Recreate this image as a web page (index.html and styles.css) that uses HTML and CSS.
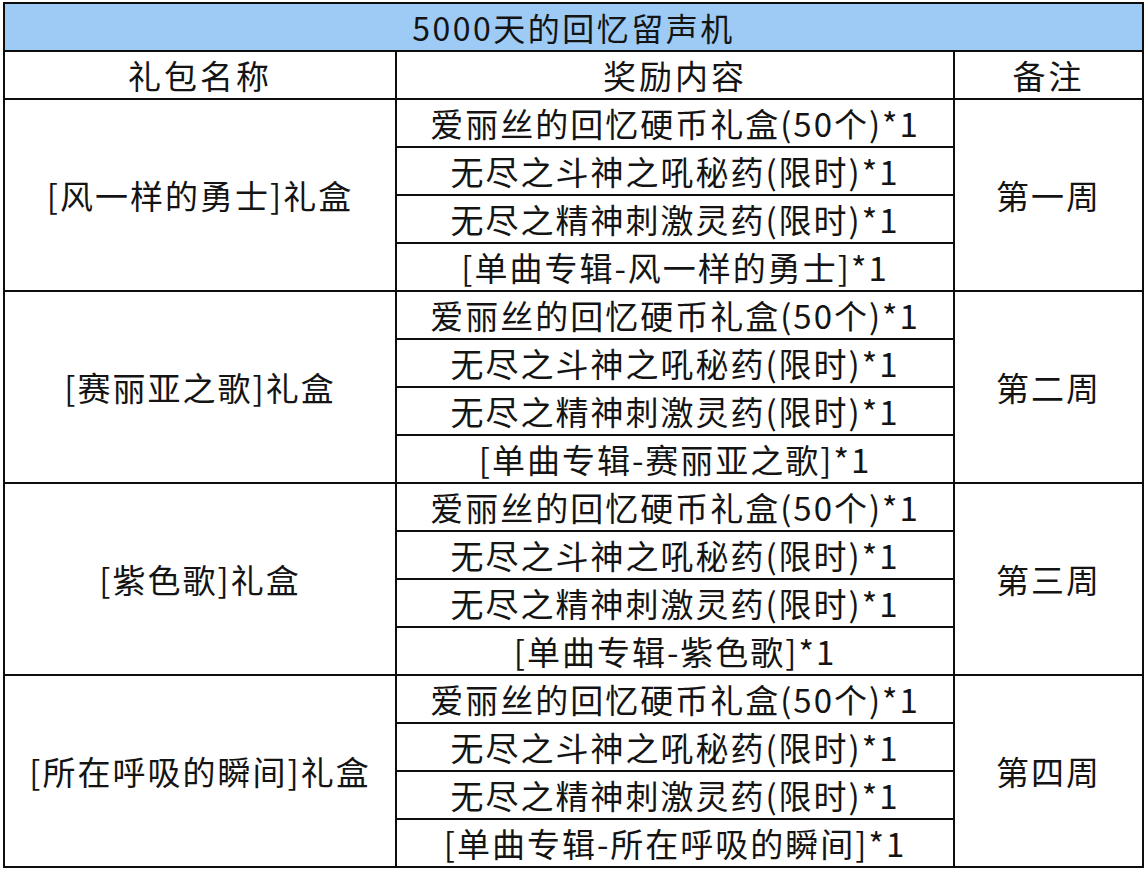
FILE: index.html
```html
<!DOCTYPE html>
<html lang="zh">
<head>
<meta charset="utf-8">
<link rel="stylesheet" href="styles.css">
</head>
<body>
<table class="gift">
  <colgroup><col class="c1"><col class="c2"><col class="c3"></colgroup>
  <tr class="title"><td colspan="3">5000天的回忆留声机</td></tr>
  <tr class="head"><td>礼包名称</td><td>奖励内容</td><td>备注</td></tr>

  <tr><td rowspan="4" class="name">[风一样的勇士]礼盒</td><td>爱丽丝的回忆硬币礼盒(50个)*1</td><td rowspan="4" class="note">第一周</td></tr>
  <tr><td>无尽之斗神之吼秘药(限时)*1</td></tr>
  <tr><td>无尽之精神刺激灵药(限时)*1</td></tr>
  <tr><td>[单曲专辑-风一样的勇士]*1</td></tr>

  <tr><td rowspan="4" class="name">[赛丽亚之歌]礼盒</td><td>爱丽丝的回忆硬币礼盒(50个)*1</td><td rowspan="4" class="note">第二周</td></tr>
  <tr><td>无尽之斗神之吼秘药(限时)*1</td></tr>
  <tr><td>无尽之精神刺激灵药(限时)*1</td></tr>
  <tr><td>[单曲专辑-赛丽亚之歌]*1</td></tr>

  <tr><td rowspan="4" class="name">[紫色歌]礼盒</td><td>爱丽丝的回忆硬币礼盒(50个)*1</td><td rowspan="4" class="note">第三周</td></tr>
  <tr><td>无尽之斗神之吼秘药(限时)*1</td></tr>
  <tr><td>无尽之精神刺激灵药(限时)*1</td></tr>
  <tr><td>[单曲专辑-紫色歌]*1</td></tr>

  <tr><td rowspan="4" class="name">[所在呼吸的瞬间]礼盒</td><td>爱丽丝的回忆硬币礼盒(50个)*1</td><td rowspan="4" class="note">第四周</td></tr>
  <tr><td>无尽之斗神之吼秘药(限时)*1</td></tr>
  <tr><td>无尽之精神刺激灵药(限时)*1</td></tr>
  <tr><td>[单曲专辑-所在呼吸的瞬间]*1</td></tr>
</table>
</body>
</html>
```
FILE: styles.css
```css
html, body {
  margin: 0;
  padding: 0;
  background: #ffffff;
}
body {
  padding: 2px 0 0 3px;
  font-family: "Noto Sans CJK SC", "Noto Sans", sans-serif;
  color: #141414;
}
.gift {
  border-collapse: collapse;
  table-layout: fixed;
  width: 1139px;
}
.c1 { width: 392px; }
.c2 { width: 558px; }
.c3 { width: 189px; }
.gift td {
  border: 2px solid #0d0d0d;
  height: 46px;
  padding: 0;
  text-align: center;
  vertical-align: middle;
  font-size: 33px;
  letter-spacing: 2px;
  line-height: 46px;
  white-space: nowrap;
}
.name {
  letter-spacing: 2.6px;
}
.title td {
  background: #9dcbf6;
  font-size: 32px;
  letter-spacing: 2.5px;
  line-height: 44px;
}
.head td {
  letter-spacing: 3px;
}
```
